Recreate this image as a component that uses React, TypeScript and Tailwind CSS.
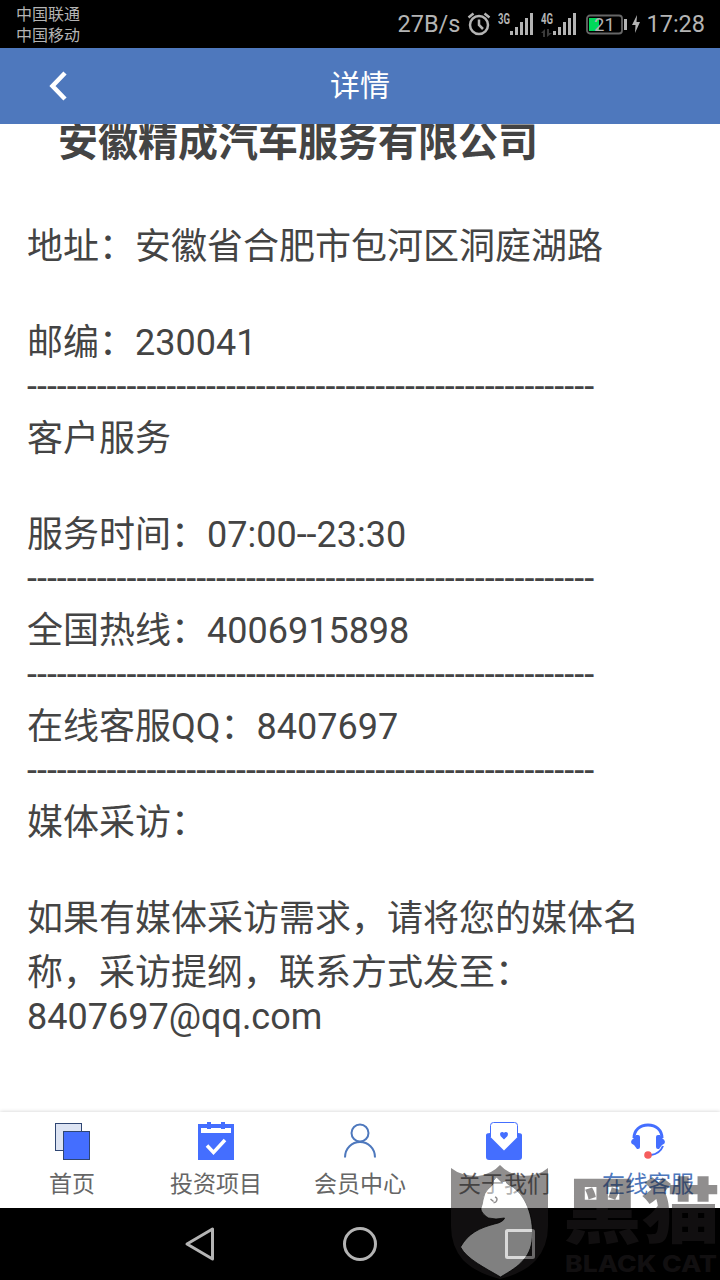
import type { ReactNode } from 'react';

const DASHES = '-'.repeat(57);

type LineProps = { children?: ReactNode };

const Line = ({ children }: LineProps) => (
  <p className="h-[54px] leading-[54px] whitespace-nowrap">{children}</p>
);

const Divider = () => (
  <p className="h-[42px] leading-[34px] whitespace-nowrap">{DASHES}</p>
);

const Gap = () => <div className="h-[42px]" />;

const Signal = () => (
  <svg width="24" height="24" viewBox="0 0 24 24" fill="#b4b4b4" className="shrink-0">
    <rect x="0" y="18" width="3" height="4" />
    <rect x="5" y="14" width="3" height="8" />
    <rect x="10" y="9" width="3" height="13" />
    <rect x="15" y="5" width="3" height="17" />
    <rect x="20" y="0" width="3" height="22" />
  </svg>
);

const StatusBar = () => (
  <div className="flex h-12 shrink-0 justify-between bg-black text-[#b4b4b4]">
    <div className="pl-4 pt-[3px] text-[16px] leading-[21px] font-['Noto_Sans_CJK_SC',sans-serif]">
      <p>中国联通</p>
      <p>中国移动</p>
    </div>
    <div className="flex h-12 items-center pr-[15px] pt-[2px]">
      <span className="w-[70px] whitespace-nowrap text-[23.5px] leading-none">27B/s</span>
      <svg width="24" height="26" viewBox="0 0 24 26" fill="none" stroke="#b4b4b4" strokeWidth="2.5" className="mb-[2px]">
        <circle cx="12" cy="14" r="9" />
        <path d="M12 8.5V14l4 4M1.5 6.5l5-4M22.500 6.500l-5-4" />
      </svg>
      <div className="ml-[7px] w-[12px] self-start pt-[9px]">
        <svg width="13" height="18" viewBox="0 0 13 18" className="block">
          <text x="0" y="13" fontSize="14" textLength="12" lengthAdjust="spacingAndGlyphs" fill="#b4b4b4" className="font-['Roboto'] font-bold">3G</text>
        </svg>
      </div>
      <div className="pb-[1px]"><Signal /></div>
      <div className="ml-[7px] w-[12px] self-start pt-[9px]">
        <svg width="13" height="16" viewBox="0 0 13 16" className="block">
          <text x="0" y="13" fontSize="14" textLength="12" lengthAdjust="spacingAndGlyphs" fill="#b4b4b4" className="font-['Roboto'] font-bold">4G</text>
        </svg>
        <svg width="11" height="8" viewBox="0 0 11 8" fill="#3a3a3a" className="mt-[2px]">
          <path d="M0 4L4 0v8H2V4zM6 0h2v4h3L6 8z" />
        </svg>
      </div>
      <div className="pb-[1px]"><Signal /></div>
      <svg width="42" height="22" viewBox="0 0 42 22" className="ml-[9px]">
        <rect x="1" y="1.500" width="35" height="18" rx="3" fill="none" stroke="#666" strokeWidth="1.800" />
        <rect x="3" y="4" width="10" height="13" fill="#00d95a" />
        <rect x="38" y="5" width="3" height="11" fill="#b4b4b4" />
        <text x="18.500" y="17" textAnchor="middle" fontSize="18.500" fill="#b4b4b4" className="font-['Roboto']">21</text>
      </svg>
      <svg width="8" height="18" viewBox="0 0 8 18" fill="#b4b4b4" className="ml-[4px] mb-[2px]">
        <path d="M5 0L0 10h3.500L3 18l5-11H4.500z" />
      </svg>
      <span className="ml-[6px] whitespace-nowrap text-[23.5px] leading-none">17:28</span>
    </div>
  </div>
);

const HomeIcon = () => (
  <svg width="40" height="40" viewBox="0 0 40 40">
    <rect x="3.500" y="1.500" width="26" height="27" fill="#dde4f3" stroke="#2f4673" />
    <rect x="11.500" y="9.500" width="26" height="28" fill="#446eff" stroke="#2f4673" />
  </svg>
);

const ProjectIcon = () => (
  <svg width="40" height="40" viewBox="0 0 40 40">
    <path d="M2 2h36v36H2z" fill="#446eff" />
    <path d="M5 6h30v5H5z" fill="#fff" />
    <path d="M11 0h4v7h-4zM25 0h4v7h-4z" fill="#446eff" />
    <path d="M11 23.500l6.500 7L29 18" fill="none" stroke="#fff" strokeWidth="3.500" />
  </svg>
);

const MemberIcon = () => (
  <svg width="40" height="40" viewBox="0 0 40 40" fill="none" stroke="#4e78bd" strokeWidth="2">
    <circle cx="20" cy="11" r="8.500" />
    <path d="M5 35.500C5 26 12 20 20 20s15 6 15 15.500" />
  </svg>
);

const AboutIcon = () => (
  <svg width="40" height="40" viewBox="0 0 40 40">
    <path d="M2 13q0-2 4-2h28q4 0 4 2v22q0 3-3 3H5q-3 0-3-3z" fill="#446eff" />
    <path d="M6.500 15V3.500Q6.500.5 9.500.5h21q3 0 3 3V15L20 28.500z" fill="#fff" />
    <path d="M6.500 15V3.500Q6.500.5 9.500.5h21q3 0 3 3V15" fill="none" stroke="#446eff" />
    <path d="M20 17.500l-3.500-3.500q-1.500-4 2-4 1 0 1.500 1 .5-1 1.500-1 3.500 0 2 4z" fill="#446eff" />
  </svg>
);

const ServiceIcon = () => (
  <svg width="40" height="40" viewBox="0 0 40 40">
    <path d="M6 16C6 8 12 3 20 3s14 5 14 13" fill="none" stroke="#446eff" strokeWidth="3" />
    <path d="M35 24c-2 5-5 8-12 9" fill="none" stroke="#446eff" strokeWidth="2" />
    <path d="M8 13h2q2 0 2 2v10q0 2-2 2H9l-3-4q-3-1-3-3t3-4zM32 13h-2q-2 0-2 2v10q0 2 2 2h1l3-4q3-1 3-3t-3-4z" fill="#446eff" />
    <circle cx="20" cy="33" r="3.800" fill="#f55d5d" />
  </svg>
);

const tabs = [
  { label: '首页', Icon: HomeIcon },
  { label: '投资项目', Icon: ProjectIcon },
  { label: '会员中心', Icon: MemberIcon },
  { label: '关于我们', Icon: AboutIcon },
  { label: '在线客服', Icon: ServiceIcon, active: true },
];

const TabBar = () => (
  <nav className="grid h-24 shrink-0 grid-cols-5 bg-white shadow-[0_0_4px_rgba(0,0,0,0.2)]">
    {tabs.map(({ label, Icon, active }) => (
      <div key={label} className="flex flex-col items-center pt-[10px]">
        <Icon />
        <span className={`mt-[6px] text-[23px] leading-[34px] ${active ? 'text-[#4e78bd]' : 'text-[#666]'}`}>{label}</span>
      </div>
    ))}
  </nav>
);

const SystemNav = () => (
  <div className="flex h-[72px] shrink-0 items-center justify-between bg-black px-[184px]">
    <svg width="32" height="36" viewBox="0 0 32 36" fill="none" stroke="#b4b4b4" strokeWidth="3" strokeLinejoin="round">
      <path d="M3 18L28.500 3v30z" />
    </svg>
    <svg width="36" height="36" viewBox="0 0 36 36" fill="none" stroke="#b4b4b4" strokeWidth="3">
      <circle cx="18" cy="18" r="15.500" />
    </svg>
    <svg width="32" height="36" viewBox="0 0 32 36" fill="none" stroke="#b4b4b4" strokeWidth="3">
      <rect x="2.500" y="4.500" width="27" height="27" rx="1" />
    </svg>
  </div>
);

// translucent brand mark laid over the bottom right corner
const Watermark = () => (
  <svg width="270" height="120" viewBox="450 1160 270 120" className="pointer-events-none absolute bottom-0 right-0 opacity-50">
    <path d="M451 1168q10 8 27 8 14-2 22-11 8 9 22 11 17 0 26-8v58q0 20-12 34-12 13-36 19-24-6-37-19-12-14-12-34z" fill="#231f20" />
    <path
      d="M496.500 1177l5 5 4-1 2 3c16 7 25 28 25 49 0 12-3 20-9 27-6 7-13 11-23 17-15-9-34-18-40-30 8-14 19-19 34-23q9-2 10-6-9 2-16 0c-5-3-8-7-7.500-10q1.500-4 2-8 1-7 5-11 4-3 5-5-1-3 3.500-7z"
      fill="#fff"
      stroke="#000"
      strokeWidth="0.800"
    />
    <path d="M490.500 1199l3 2.500M495 1197q3 1 1.500 4-1 2-3 1.500" fill="none" stroke="#231f20" strokeWidth="1.500" />
    <text
      x="563"
      y="1237"
      fontSize="71"
      textLength="157"
      lengthAdjust="spacingAndGlyphs"
      fill="#231f20"
      className="font-['Noto_Sans_CJK_SC',sans-serif] font-black"
    >
      黑猫
    </text>
    <text x="565" y="1272" fontSize="23" textLength="152" lengthAdjust="spacingAndGlyphs" fill="#231f20" className="font-['Inter',sans-serif] font-extrabold">BLACK CAT</text>
  </svg>
);

const App = () => (
  <div className="relative flex h-[1280px] w-[720px] flex-col overflow-hidden bg-white font-['Roboto','Noto_Sans_CJK_SC',sans-serif]">
    <StatusBar />
    <header className="grid h-[76px] shrink-0 grid-cols-3 items-center bg-[#4e78bd] text-white">
      <svg width="20" height="30" viewBox="0 0 20 30" fill="none" stroke="#fff" strokeWidth="4.500" className="ml-[48px]">
        <path d="M17 2L4.500 15 17 28" />
      </svg>
      <h1 className="text-center text-[30px] leading-[40px]">详情</h1>
    </header>
    <main className="min-h-0 flex-1 overflow-hidden pl-[27px] text-[36px] text-[#444]">
      <h2 className="-mt-[11px] ml-[31px] h-[107px] text-[40px] font-bold leading-[60px]">安徽精成汽车服务有限公司</h2>
      <Line>地址：安徽省合肥市包河区洞庭湖路</Line>
      <Gap />
      <Line>邮编：230041</Line>
      <Divider />
      <Line>客户服务</Line>
      <Gap />
      <Line>服务时间：07:00--23:30</Line>
      <Divider />
      <Line>全国热线：4006915898</Line>
      <Divider />
      <Line>在线客服QQ：8407697</Line>
      <Divider />
      <Line>媒体采访：</Line>
      <Gap />
      <Line>如果有媒体采访需求，请将您的媒体名</Line>
      <Line>称，采访提纲，联系方式发至：</Line>
      <p className="leading-[34px]">8407697@qq.com</p>
    </main>
    <TabBar />
    <SystemNav />
    <Watermark />
  </div>
);

export default App;
